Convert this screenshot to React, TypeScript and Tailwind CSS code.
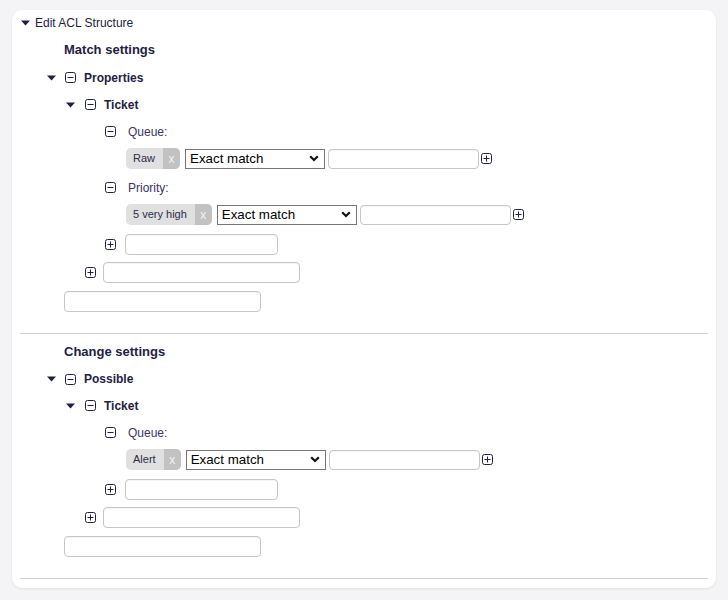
import React from "react";

const font = { fontFamily: '"Liberation Sans", Arial, sans-serif' };

function Caret() {
  return (
    <svg width="9" height="6" viewBox="0 0 9 6" className="shrink-0">
      <path d="M0 0.5 H9 L4.5 5.5 Z" fill="#1f2143" />
    </svg>
  );
}

function BoxIcon({ plus = false }: { plus?: boolean }) {
  return (
    <svg width="11" height="11" viewBox="0 0 11 11" className="shrink-0">
      <rect x="0.5" y="0.5" width="10" height="10" rx="2" fill="none" stroke="#1f2143" />
      <path d="M2.5 5.5 H8.5" stroke="#1f2143" />
      {plus && <path d="M5.5 2.5 V8.5" stroke="#1f2143" />}
    </svg>
  );
}

function TextBox({ w, h = "h-[21px]" }: { w: string; h?: string }) {
  return (
    <div
      className={`${w} ${h} rounded-[4px] border border-[#c6c6c6] bg-white shadow-[inset_0_1px_1px_rgba(0,0,0,0.04)]`}
    />
  );
}

function Chip({ label }: { label: string }) {
  return (
    <div className="flex h-[21px] items-stretch overflow-hidden rounded-[5px] bg-[#e0e0e0] text-[11px]">
      <span className="flex items-center pl-[7px] pr-[8px] text-[#2d2d4a]">{label}</span>
      <span className="flex w-[17px] items-center justify-center bg-[#c2c2c2] text-[12px] text-[#f2f2f2]">
        x
      </span>
    </div>
  );
}

function MatchSelect() {
  return (
    <div className="flex h-[20px] w-[140px] items-center justify-between border border-[#767676] bg-white pl-[4px] pr-[5px] text-[13.33px] text-black">
      <span>Exact match</span>
      <svg width="10" height="7" viewBox="0 0 10 7">
        <path d="M1.2 1.3 L5 5 L8.8 1.3" fill="none" stroke="#111" strokeWidth="2.2" />
      </svg>
    </div>
  );
}

function Condition({ label, value }: { label: string; value: string }) {
  return (
    <div>
      <div className="flex h-[27px] items-center gap-[12px] pl-[93px] text-[12px] text-[#3b3364]">
        <BoxIcon />
        <span>{label}</span>
      </div>
      <div className="mt-[3px] flex items-center pl-[114px]">
        <Chip label={value} />
        <div className="ml-[5px]">
          <MatchSelect />
        </div>
        <div className="ml-[3px] flex items-center gap-[2px]">
          <TextBox w="w-[151px]" h="h-[20px]" />
          <BoxIcon plus />
        </div>
      </div>
    </div>
  );
}

function Section({
  title,
  group,
  groupH,
  items,
}: {
  title: string;
  group: string;
  groupH: string;
  items: { label: string; value: string }[];
}) {
  return (
    <div>
      <div className="flex h-[28px] items-center pl-[52px] text-[13px] font-bold text-[#1f2143]">{title}</div>
      <div className={`flex ${groupH} items-center pl-[35px] text-[12px] font-bold text-[#1f2143]`}>
        <Caret />
        <span className="ml-[9px]">
          <BoxIcon />
        </span>
        <span className="ml-[8px]">{group}</span>
      </div>
      <div className="flex h-[27px] items-center pl-[54px] text-[12px] font-bold text-[#1f2143]">
        <Caret />
        <span className="ml-[10px]">
          <BoxIcon />
        </span>
        <span className="ml-[8px]">Ticket</span>
      </div>
      <div className="flex flex-col gap-[5px]">
        {items.map((it) => (
          <Condition key={it.label} label={it.label} value={it.value} />
        ))}
      </div>
      <div className="mt-[9px] flex items-center gap-[9px] pl-[93px]">
        <BoxIcon plus />
        <TextBox w="w-[153px]" />
      </div>
      <div className="mt-[7px] flex items-center gap-[7px] pl-[73px]">
        <BoxIcon plus />
        <TextBox w="w-[197px]" />
      </div>
      <div className="mt-[8px] pl-[52px]">
        <TextBox w="w-[197px]" />
      </div>
      <div className="mx-[8px] mt-[21px] h-px bg-[#cfcfcf]" />
    </div>
  );
}

export default function App() {
  return (
    <div className="min-h-[600px] bg-[#f4f4f7] pt-[10px] pb-[12px] pl-[12px] pr-[12px]" style={font}>
      <div className="rounded-[10px] bg-white pb-[9px] shadow-[0_1px_3px_rgba(0,0,0,0.08)]">
        <div className="flex h-[26px] items-center pl-[9px] text-[12px] text-[#1f2143]">
          <Caret />
          <span className="ml-[5px]">Edit ACL Structure</span>
        </div>
        <Section
          title="Match settings"
          group="Properties"
          groupH="h-[27px]"
          items={[
            { label: "Queue:", value: "Raw" },
            { label: "Priority:", value: "5 very high" },
          ]}
        />
        <div className="mt-[4px]">
          <Section
            title="Change settings"
            group="Possible"
            groupH="h-[26px]"
            items={[{ label: "Queue:", value: "Alert" }]}
          />
        </div>
      </div>
    </div>
  );
}
